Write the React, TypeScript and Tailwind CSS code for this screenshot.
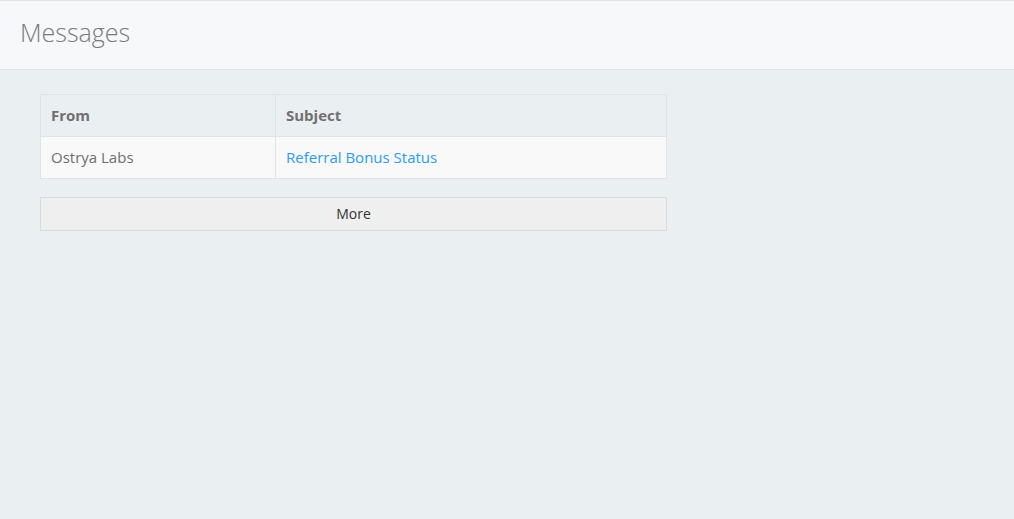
import React from "react";

export default function App() {
  return (
    <div
      className="min-h-[519px] bg-[#eaeff2] text-[15px]"
      style={{ fontFamily: '"Open Sans", sans-serif' }}
    >
      <div className="h-[70px] bg-[#f6f8f9] border-t border-b border-[#dfe3e6] flex items-center px-5">
        <h1 className="text-[25px] font-light text-[#7a7b7d] leading-none -mt-[6px]">Messages</h1>
      </div>
      <div className="pl-10 pt-6">
        <table className="w-[627px] border-collapse border border-[#dfe3e5]">
          <thead>
            <tr className="h-[42px] bg-[#eaeff2]">
              <th className="w-[235px] text-left font-bold text-[#707070] px-[10px] border border-[#dfe3e5]">From</th>
              <th className="text-left font-bold text-[#707070] px-[10px] border border-[#dfe3e5]">Subject</th>
            </tr>
          </thead>
          <tbody>
            <tr className="h-[42px] bg-[#f9f9f9]">
              <td className="px-[10px] text-[#6e6e6e] border border-[#dfe3e5]">Ostrya Labs</td>
              <td className="px-[10px] border border-[#dfe3e5]">
                <a className="text-[#2d9bef]">Referral Bonus Status</a>
              </td>
            </tr>
          </tbody>
        </table>
        <button className="mt-[18px] w-[627px] h-[34px] pb-[2px] bg-[#efefef] border border-[#dadada] text-[#333] text-[14px]">
          More
        </button>
      </div>
    </div>
  );
}
